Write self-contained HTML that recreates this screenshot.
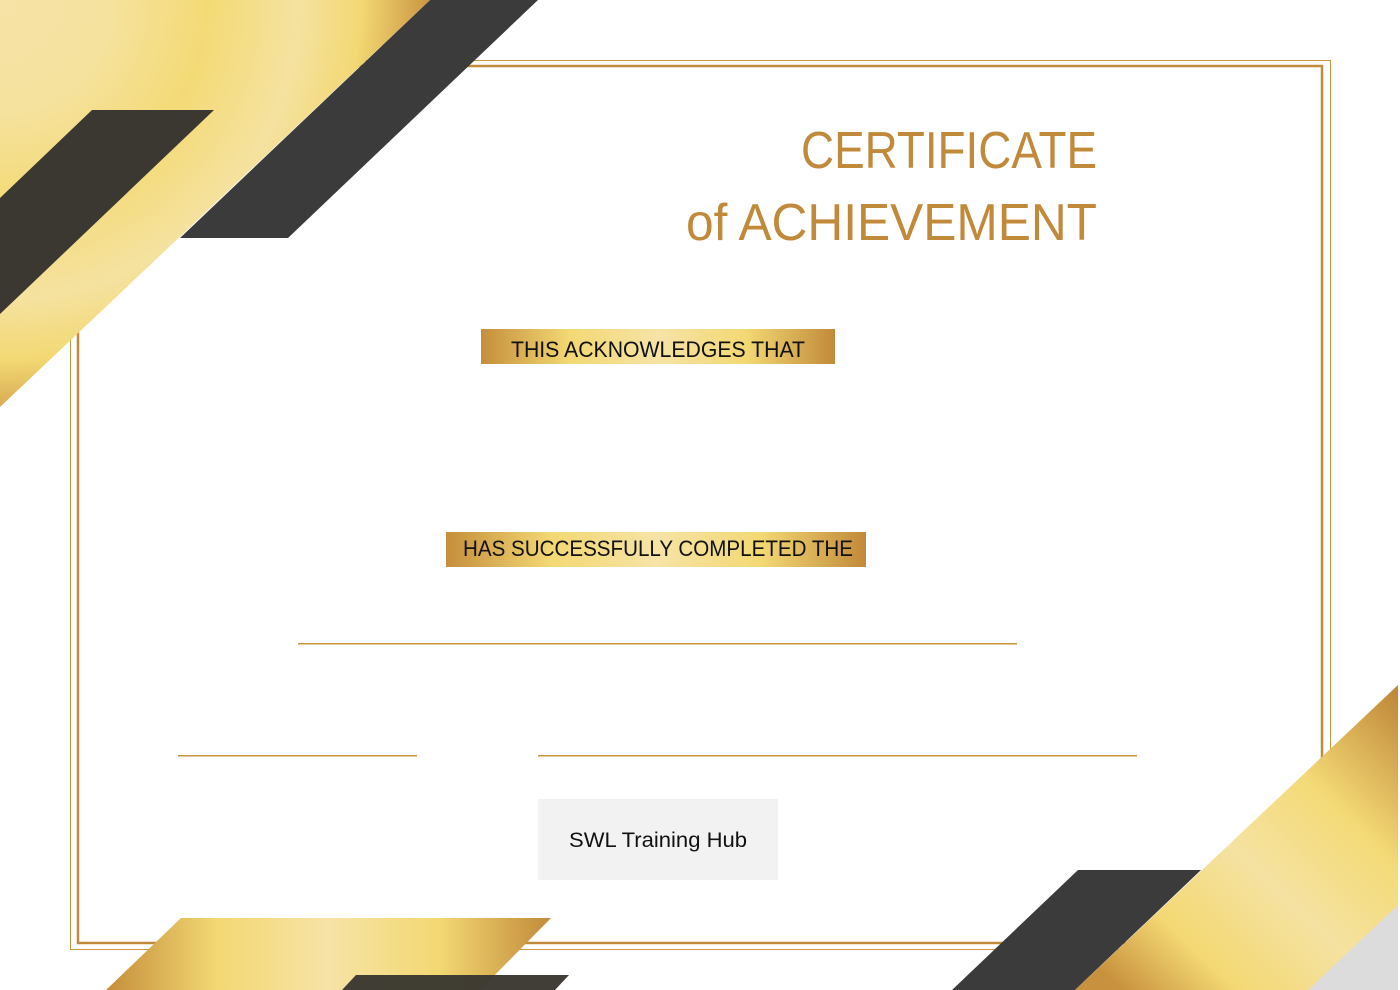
<!DOCTYPE html>
<html><head><meta charset="utf-8"><style>
html,body{margin:0;padding:0;background:#fff;}
svg{display:block}
</style></head><body>
<svg width="1400" height="990" viewBox="0 0 1400 990" xmlns="http://www.w3.org/2000/svg">
<defs>
<radialGradient id="gTL" gradientUnits="userSpaceOnUse" cx="0" cy="0" r="440">
<stop offset="0" stop-color="#f6e3a6"/><stop offset="0.25" stop-color="#f5e29e"/><stop offset="0.47" stop-color="#f4da76"/><stop offset="0.68" stop-color="#f5e2a0"/><stop offset="0.82" stop-color="#f3d873"/><stop offset="1" stop-color="#c48c3a"/>
</radialGradient>
<linearGradient id="gBR" gradientUnits="userSpaceOnUse" x1="1120" y1="990" x2="1400" y2="700">
<stop offset="0" stop-color="#c8913d"/><stop offset="0.2" stop-color="#f3d873"/><stop offset="0.45" stop-color="#f5e2a2"/><stop offset="0.7" stop-color="#f4da76"/><stop offset="1" stop-color="#c18a3a"/>
</linearGradient>
<linearGradient id="gH" x1="0" y1="0" x2="1" y2="0">
<stop offset="0" stop-color="#c58e3b"/><stop offset="0.25" stop-color="#f3d873"/><stop offset="0.5" stop-color="#f6e3a6"/><stop offset="0.75" stop-color="#f3d873"/><stop offset="1" stop-color="#c18a3a"/>
</linearGradient>
</defs>

<rect x="70.5" y="60.5" width="1260" height="889" fill="none" stroke="#c9963f" stroke-width="1"/>
<rect x="78" y="66" width="1244" height="877" fill="none" stroke="#c08a3a" stroke-width="2.5"/>

<polygon points="430,0 538,0 288,238 180,238" fill="#3b3b3b"/>
<polygon points="0,0 430,0 0,407" fill="url(#gTL)"/>
<polygon points="92,110 214,110 0,314 0,198" fill="#3a3831"/>

<polygon points="181,918 551,918 480,990 106,990" fill="url(#gH)"/>
<polygon points="356,975 569,975 555,990 342,990" fill="#3a3831" opacity="0.97"/>

<polygon points="1078,870 1201,870 1075,990 952,990" fill="#3b3b3b"/>
<polygon points="1398,685 1398,990 1075,990" fill="url(#gBR)"/>
<polygon points="1398,905 1398,990 1308,990" fill="#dcdcdc"/>

<g font-family="'Liberation Sans', sans-serif" fill="#c08a3a" text-anchor="end">
<text x="1097" y="168" font-size="52" textLength="296" lengthAdjust="spacingAndGlyphs">CERTIFICATE</text>
<text x="1097" y="240" font-size="52" textLength="411" lengthAdjust="spacingAndGlyphs">of ACHIEVEMENT</text>
</g>

<rect x="481" y="329" width="354" height="35" fill="url(#gH)"/>
<text x="511" y="357" font-family="'Liberation Sans', sans-serif" font-size="22" fill="#111" textLength="294" lengthAdjust="spacingAndGlyphs">THIS ACKNOWLEDGES THAT</text>
<rect x="446" y="532" width="420" height="35" fill="url(#gH)"/>
<text x="463" y="556" font-family="'Liberation Sans', sans-serif" font-size="22" fill="#111" textLength="390" lengthAdjust="spacingAndGlyphs">HAS SUCCESSFULLY COMPLETED THE</text>

<rect x="298" y="643" width="719" height="1.5" fill="#c9963f"/>
<rect x="178" y="755" width="239" height="1.5" fill="#c9963f"/>
<rect x="538" y="755" width="599" height="1.5" fill="#c9963f"/>

<rect x="538" y="799" width="240" height="81" fill="#f2f2f2"/>
<text x="569" y="847" font-family="'Liberation Sans', sans-serif" font-size="21" fill="#111" textLength="178" lengthAdjust="spacingAndGlyphs">SWL Training Hub</text>
</svg>
</body></html>
